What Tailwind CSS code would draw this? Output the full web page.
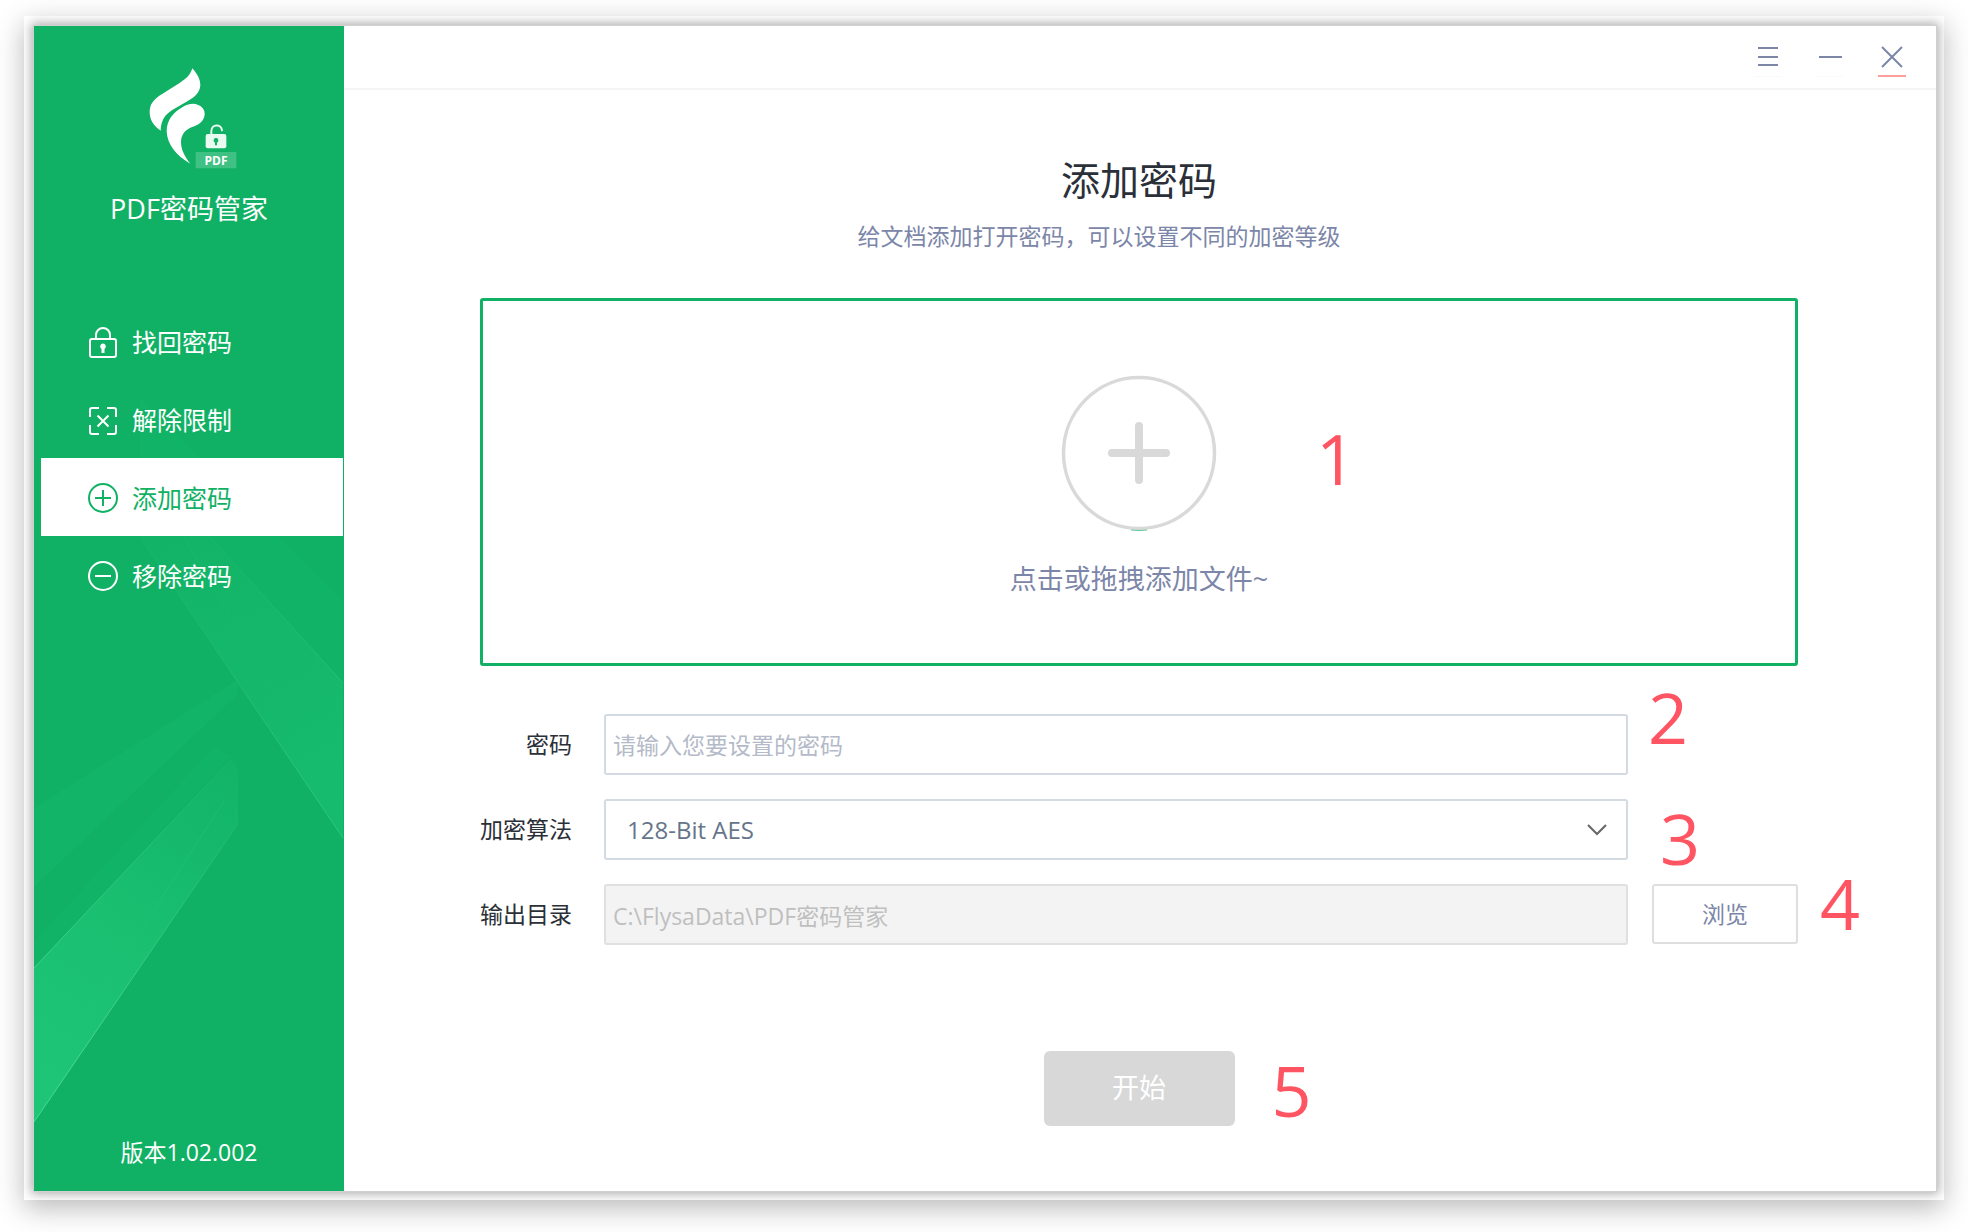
<!DOCTYPE html>
<html lang="zh-CN">
<head>
  <meta charset="UTF-8" />
  <meta name="viewport" content="width=device-width, initial-scale=1.0" />
  <title>PDF密码管家</title>
  <script src="https://cdn.jsdelivr.net/npm/@tailwindcss/browser@4"></script>
</head>
<body class="min-h-screen flex bg-white px-6 pt-4 pb-8 font-['Open_Sans','Noto_Sans_CJK_SC',sans-serif]">

  <!-- VENTANA -->
  <div class="flex flex-1 overflow-hidden bg-white pt-[10px] pb-[9px] pl-[10px] pr-2 shadow-[0_8px_26px_rgba(0,0,0,0.28)]">
    <div class="flex flex-1 bg-white shadow-[0_0_0_1px_#d0d0d0,0_0_10px_3px_rgba(0,0,0,0.32)]">

      <!-- SIDEBAR -->
      <aside class="relative flex w-[310px] shrink-0 flex-col overflow-hidden bg-[#11b165] text-white">
        <svg class="absolute left-0 top-0 h-[1165px] w-[310px]" viewBox="0 0 310 1165" fill="none" aria-hidden="true">
          <defs>
            <linearGradient id="beamLow" gradientUnits="userSpaceOnUse" x1="0" y1="1040" x2="215" y2="735">
              <stop offset="0" stop-color="#1ec577" />
              <stop offset="0.45" stop-color="#1abf70" />
              <stop offset="1" stop-color="#12b367" />
            </linearGradient>
            <linearGradient id="beamLine" gradientUnits="userSpaceOnUse" x1="0" y1="1000" x2="203" y2="735">
              <stop offset="0" stop-color="#45d894" />
              <stop offset="1" stop-color="#15b469" />
            </linearGradient>
            <linearGradient id="beamRight" gradientUnits="userSpaceOnUse" x1="106" y1="420" x2="309" y2="740">
              <stop offset="0" stop-color="#11b165" />
              <stop offset="1" stop-color="#17bb6d" />
            </linearGradient>
            <linearGradient id="lineRight" gradientUnits="userSpaceOnUse" x1="106" y1="450" x2="309" y2="780">
              <stop offset="0" stop-color="#11b165" />
              <stop offset="1" stop-color="#2bc67f" />
            </linearGradient>
          </defs>
          <path d="M106 371 309 575V657L106 434Z" fill="#12b467" opacity="0.6" />
          <path d="M106 434 309 657V812L106 511Z" fill="url(#beamRight)" />
          <path d="M106 434 309 657M106 511 309 812" stroke="url(#lineRight)" />
          <path d="M150 511 309 785" stroke="#1cbd72" opacity="0.5" />
          <path d="M0 783 203 655V668L0 860Z" fill="#13b568" opacity="0.7" />
          <path d="M0 783 203 655V668L0 860" stroke="#18b86c" opacity="0.6" />
          <path d="M0 916 180 721 196 730 0 942Z" fill="#13b669" opacity="0.6" />
          <path d="M0 942 196 734Q203 738 203 750V799L0 1096Z" fill="url(#beamLow)" />
          <path d="M0 942 196 734Q203 738 203 750V799L0 1096" stroke="url(#beamLine)" />
          <path d="M0 1070 190 775" stroke="#22c87b" opacity="0.5" />
        </svg>

        <div class="relative flex flex-col items-center pt-[39px]">
          <svg class="h-[106px] w-[118px]" viewBox="0 30 354 318" role="img" aria-label="PDF">
            <path d="M187 40C203 58 211 74 211 91C210 112 195 126 172 139L128 164C104 179 93 196 92 227C72 214 58 194 59 169C60 148 69 136 88 122L150 83C169 71 181 60 187 40Z" fill="#fff" />
            <path d="M181 326C140 303 111 268 110 229C110 196 129 172 158 156C174 147 190 144 203 149C217 154 225 165 224 178C223 195 211 207 193 214C169 222 155 234 153 258C152 284 165 306 181 326Z" fill="#fff" />
            <path d="M244 240V228C244 206 274 206 276 226" fill="none" stroke="#e9faf1" stroke-width="6" stroke-linecap="round" />
            <rect x="227" y="237" width="62" height="43" rx="6" fill="#e9faf1" />
            <path d="M258 248a8 8 0 0 1 3 15v8h-6v-8a8 8 0 0 1 3-15Z" fill="#11b165" />
            <rect x="197" y="291" width="122" height="49" rx="3" fill="#40c184" />
            <text x="258" y="329" text-anchor="middle" fill="#fff" class="text-[36px] font-bold">PDF</text>
          </svg>
          <div class="mt-[18px] text-[27px] leading-10">PDF密码管家</div>
        </div>

        <nav class="relative mt-[73px] flex flex-col pr-px pl-[7px] text-[25px]">
          <a href="#" class="flex h-[78px] items-center gap-[14px] pt-[3px] pl-[47px]">
            <svg class="h-8 w-[30px]" viewBox="0 0 30 32" fill="none" stroke="currentColor" stroke-width="2">
              <rect x="2" y="12" width="26" height="18" rx="2" />
              <path d="M8 12V8a7 7 0 0 1 14 0v4" />
              <path d="M15 16.500a3 3 0 0 1 1.500 5.500v4h-3v-4a3 3 0 0 1 1.500-5.500Z" fill="currentColor" stroke="none" />
            </svg>
            找回密码
          </a>
          <a href="#" class="flex h-[78px] items-center gap-[14px] pt-[3px] pl-[47px]">
            <svg class="h-8 w-[30px]" viewBox="0 0 30 32" fill="none" stroke="currentColor" stroke-width="2">
              <path d="M2 12V5q0-2 2-2h7M19 3h7q2 0 2 2v7M28 20v7q0 2-2 2h-7M11 29H4q-2 0-2-2v-7" />
              <path d="M9.500 10.500l11 11M20.500 10.500l-11 11" />
            </svg>
            解除限制
          </a>
          <a href="#" aria-current="page" class="flex h-[78px] items-center gap-[14px] bg-white pt-[3px] pl-[47px] text-[#11b165]">
            <svg class="h-8 w-[30px]" viewBox="0 0 30 32" fill="none" stroke="currentColor" stroke-width="2">
              <circle cx="15" cy="15" r="14" />
              <path d="M7 15h16M15 7v16" />
            </svg>
            添加密码
          </a>
          <a href="#" class="flex h-[78px] items-center gap-[14px] pt-[3px] pl-[47px]">
            <svg class="h-8 w-[30px]" viewBox="0 0 30 32" fill="none" stroke="currentColor" stroke-width="2">
              <circle cx="15" cy="15" r="14" />
              <path d="M7 15h16" />
            </svg>
            移除密码
          </a>
        </nav>

        <div class="relative mt-auto pb-[23px] text-center text-[23px] leading-8">版本1.02.002</div>
      </aside>

      <!-- CONTENIDO -->
      <main class="flex flex-1 flex-col">
        <header class="flex h-16 items-start justify-end gap-[34px] border-b-2 border-[#f5f5f5] pt-4 pr-[30px] text-[#7c86a8]">
          <button type="button" aria-label="菜单" class="flex h-[35px] w-7 justify-center border-b border-[#fafafa]">
            <svg class="h-[30px] w-7" viewBox="0 0 28 30" stroke="currentColor" stroke-width="2"><path d="M4 6h20M4 15h20M4 23h20" /></svg>
          </button>
          <button type="button" aria-label="最小化" class="flex h-[35px] w-7 justify-center border-b border-[#fafafa]">
            <svg class="h-[30px] w-7" viewBox="0 0 28 30" stroke="currentColor" stroke-width="2"><path d="M3 15h23" /></svg>
          </button>
          <button type="button" aria-label="关闭" class="flex h-[35px] w-7 justify-center border-b-2 border-[#ff9c9c]">
            <svg class="h-[30px] w-7" viewBox="0 0 28 30" stroke="currentColor" stroke-width="2"><path d="M4 5l20 20M24 5L4 25" /></svg>
          </button>
        </header>

        <div class="flex flex-col pt-[66px] pr-[138px] pl-[136px]">
          <h1 class="text-center text-[39px] leading-[48px] text-[#2b2f38]">添加密码</h1>
          <p class="mt-4 pr-20 text-center text-[23px] leading-8 text-[#7c86a8]">给文档添加打开密码，可以设置不同的加密等级</p>

          <div class="relative mt-[46px]">
            <button type="button" class="flex h-[368px] w-full flex-col items-center rounded-[3px] border-3 border-[#11b165] pt-[74px]">
              <svg class="h-[156px] w-[156px]" viewBox="0 0 156 156" fill="none" stroke="#d9d9d9" aria-hidden="true">
                <circle cx="78" cy="78" r="75.500" stroke-width="3.500" />
                <path d="M78 51v54M51 78h54" stroke-width="8" stroke-linecap="round" />
                <path d="M70 155q8 1 16 0" stroke="#5cc795" />
              </svg>
              <span class="mt-7 text-[27px] leading-10 text-[#7c86a8]">点击或拖拽添加文件~</span>
            </button>
            <span class="absolute top-[125px] left-[836px] text-[70px] leading-none text-[#ff5563]">1</span>
          </div>

          <form class="mt-12 flex flex-col">
            <div class="grid grid-cols-[92px_1fr_146px] items-center gap-x-8 gap-y-6 text-[23px] text-[#2b2f38]">
              <label for="clave" class="text-right">密码</label>
              <input id="clave" type="text" placeholder="请输入您要设置的密码" class="-mr-2 h-[61px] rounded-[3px] border-2 border-[#d3dae1] px-[7px] placeholder:text-[#b4bac8]" />
              <div class="relative h-[61px]">
                <span class="absolute -top-8 -left-1 text-[70px] leading-none text-[#ff5563]">2</span>
              </div>

              <label for="algoritmo" class="text-right whitespace-nowrap">加密算法</label>
              <div class="relative -mr-2">
                <select id="algoritmo" class="h-[61px] w-full appearance-none rounded-[3px] border-2 border-[#d3dae1] px-[21px] text-2xl text-[#66758a]">
                  <option>128-Bit AES</option>
                </select>
                <svg class="pointer-events-none absolute top-6 right-5 h-[14px] w-[22px]" viewBox="0 0 22 14" fill="none" stroke="#666" stroke-width="2"><path d="M2 2l9 9 9-9" /></svg>
              </div>
              <div class="relative h-[61px]">
                <span class="absolute top-1 left-2 text-[70px] leading-none text-[#ff5563]">3</span>
              </div>

              <label for="salida" class="text-right whitespace-nowrap">输出目录</label>
              <input id="salida" type="text" value="C:\FlysaData\PDF密码管家" disabled class="-mr-2 h-[61px] rounded-[3px] border-2 border-[#e0e0e0] bg-[#f3f3f3] px-[7px] text-[#bfbfbf]" />
              <div class="relative h-[61px]">
                <button type="button" class="h-[60px] w-full rounded-[3px] border-2 border-[#dedede] text-[#7c86a8]">浏览</button>
                <span class="absolute -top-4 left-[168px] text-[70px] leading-none text-[#ff5563]">4</span>
              </div>
            </div>

            <div class="relative mt-[106px] self-center">
              <button type="submit" disabled class="h-[75px] w-[191px] rounded-md bg-[#d8d8d8] text-[27px] text-white">开始</button>
              <span class="absolute top-1 left-[228px] text-[70px] leading-none text-[#ff5563]">5</span>
            </div>
          </form>
        </div>
      </main>
    </div>
  </div>

</body>
</html>
